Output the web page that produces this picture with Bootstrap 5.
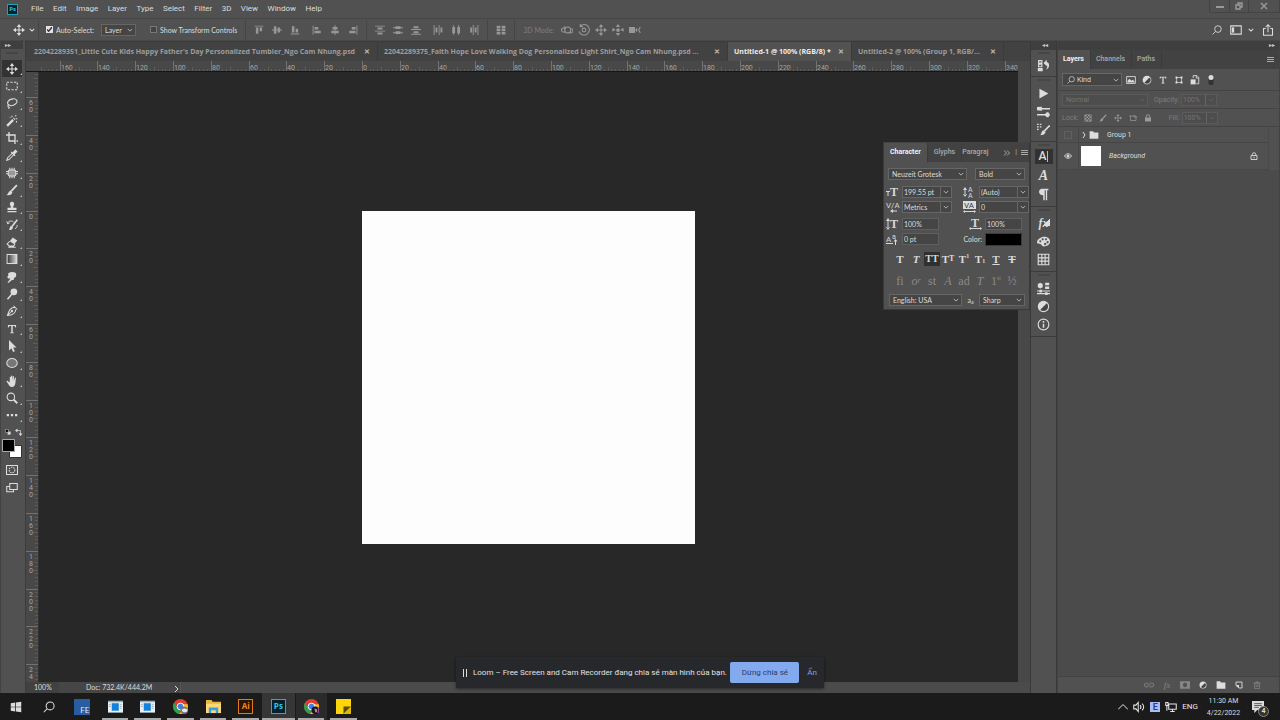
<!DOCTYPE html>
<html lang="en">
<head>
<meta charset="utf-8">
<meta name="viewport" content="width=device-width, initial-scale=1">
<title>Untitled-1 @ 100% (RGB/8)</title>
<link rel="stylesheet" href="https://cdn.jsdelivr.net/npm/bootstrap@5.3.0/dist/css/bootstrap.min.css">
<style>
:root{--chrome:#515151;--field:#454545;--edge:#666;--ink:#dcdcdc}
body{font:8px/12px Roboto,"Noto Sans",sans-serif;background:#282828;color:var(--ink);overflow:hidden}
button,input,select{font:inherit;color:inherit;background:none;border:0;padding:0;margin:0;border-radius:0}
button{display:inline-flex;align-items:center;justify-content:center}
a{color:inherit;text-decoration:none}
svg.ic{width:12px;height:12px;display:block;fill:none;stroke:currentColor;stroke-width:1.4;flex:none}
svg .f{fill:currentColor;stroke:none}
.s10{width:10px!important;height:10px!important}
.s8{width:8px!important;height:8px!important}
.s6{width:6px!important;height:6px!important}
.menubar{height:19px;background:var(--chrome);border-bottom:1px solid #464646;padding-left:7px}
.menubar nav{width:291px;margin-left:13px}
.pslogo{background:#06202c;border:1px solid #1fa2bd;color:#2fc0e0;width:11px;height:11px;font:bold 6px/9px "Open Sans",sans-serif;text-align:center}
.winctl{align-self:flex-start;height:13px;border:1px solid #444;border-top:0;color:#9a9a9a}
.winctl button{width:19px}
.winctl button+button{border-left:1px solid #444}
.winctl button:last-child{width:31px}
.optbar{height:22px;background:var(--chrome);font:7px/12px Lato,sans-serif;border-bottom:1px solid #484848;padding-left:13px}
.tick{appearance:none;width:7px;height:7px;border:1px solid #777;background:#444;flex:none}
.tick:checked{background:#e2e2e2 url("data:image/svg+xml,%3Csvg xmlns='http://www.w3.org/2000/svg' viewBox='0 0 8 8'%3E%3Cpath d='M1 4l2 2 4-5' fill='none' stroke='%23333' stroke-width='1.6'/%3E%3C/svg%3E") center/7px;border-color:#e2e2e2}
.checklabel{gap:3px}
.pick{--chev:url("data:image/svg+xml,%3Csvg xmlns='http://www.w3.org/2000/svg' viewBox='0 0 8 8'%3E%3Cpath d='M1 2.5l3 3 3-3' fill='none' stroke='%23bbb' stroke-width='1.2'/%3E%3C/svg%3E");appearance:none;height:12px;border:1px solid var(--edge);background:var(--field) var(--chev) no-repeat right 2px center/6px;padding-left:3px;line-height:10px;min-width:0}
.pick.split{padding-left:1px;background:var(--chev) no-repeat right 2px center/6px,linear-gradient(var(--edge) 0 0) no-repeat right 10px center/1px 100%,var(--field)}
.pick.off{color:#757575;border-color:#5b5b5b;background-color:#4d4d4d;--chev:url("data:image/svg+xml,%3Csvg xmlns='http://www.w3.org/2000/svg' viewBox='0 0 8 8'%3E%3Cpath d='M1 2.5l3 3 3-3' fill='none' stroke='%23666' stroke-width='1.2'/%3E%3C/svg%3E");opacity:1}
.pick.bare{border:0;background-color:transparent}
.box-in{height:12px;border:1px solid #5f5f5f;background:var(--field);padding-left:1px;line-height:10px;width:37px}
.vr1{width:1px;height:20px;background:#454545;flex:none}
.vr1.first{margin:0 7px 0 3px}
#autosel{width:35px;margin-left:7px;margin-right:14px}
.cells{color:#979797}
.cells button{width:18px;height:18px}
.cells.c17 button{width:17px}
.optright{gap:8px;padding-right:6px}
.wk{gap:6px}
.tools{width:26px;background:var(--chrome);border-left:1px solid #434343;border-right:1px solid #3c3c3c;padding-right:2px;flex:none}
.strip{height:8px;background:#3f3f3f;font-size:6px;line-height:8px;color:#ccc;flex:none}
.strip.tall{height:9px}
.grips{height:11px;flex:none;background:radial-gradient(circle,#444 0 0) no-repeat center 3px/12px 2px}
.toollist{height:364px}
.toollist button{flex:1 1 0;width:20px;min-height:0;position:relative}
.toollist button::after{content:"";position:absolute;right:0;bottom:2px;border:1px solid transparent;border-right-color:#bbb;border-bottom-color:#bbb}
.toollist button.on{background:#333}
.swatches{margin-top:2px}
.tools .screenmode{margin-top:6px}
main{min-width:0}
.doctabs{height:20px;background:#424242;border-top:1px solid #3c3c3c;font:bold 7px/20px "Open Sans",sans-serif;color:#9d9d9d;padding-left:2px;flex:none}
.doctab{padding:0 7px 0 6px;flex:0 1 350px;white-space:nowrap;border-right:1px solid #3b3b3b;min-width:0}
.doctab.on{background:#525252;color:#ececec;flex-basis:124px}
.doctab.last{flex-basis:152px}
.doctab button{font-size:7px;color:#bbb}
.hruler{height:11px;background:#484848;border-bottom:1px solid #151515;flex:none}
.vruler{width:13px;background:#484848;border-right:1px solid #333;flex:none}
.hruler svg,.vruler svg{display:block;width:100%;height:100%;overflow:hidden}
.rl{font:7px Roboto,sans-serif;fill:#a5a5a5}
.artboard{width:333px;aspect-ratio:1;background:#fdfdfd}
.scrolly{width:12px;background:#484848;flex:none}
.status{height:11px;background:#464646;font:7px/11px Lato,sans-serif;flex:none}
.status .thumb{background:#4b4b4b;border-left:1px solid #555}
.docinfo{padding-left:27px;padding-right:20px}
.zoombox{width:33px;padding-left:8px;background:#414141;line-height:11px;height:11px}
.dock{width:27px;background:var(--chrome);border-left:1px solid #393939;border-right:1px solid #393939;flex:none}
.dockset{border-bottom:1px solid #3c3c3c;padding:7px 0 3px;background:radial-gradient(circle,#464646 0 0) no-repeat center 2px/12px 2px}
.dockset.one{padding:6px 0 2px}
.dockset button{width:18px;height:18px;flex:none}
.dockset button.on{background:#323232;height:15px;margin:0 0 3px}
.dockset svg{width:13px;height:13px}
.dockset .chA{font:500 12px/15px Roboto,sans-serif}
.dockset .chA span{border-right:1px solid #bbb;line-height:11px;padding-right:1px}
.dockset .chS{font:italic bold 14px/16px "Liberation Serif",serif}
.dockset .fxs{font:italic bold 12px/16px "Liberation Serif",serif;background:linear-gradient(135deg,transparent 55%,#ddd 56%) no-repeat right 3px top 4px/9px 8px}
.layers{width:223px;background:var(--chrome);border-left:1px solid #434343;border-right:1px solid #434343;flex:none;font-size:7px}
.ptabs{background:#424242;height:19px;color:#a9a9a9;font:500 7px/19px Roboto,sans-serif}
.ptabs button{border-right:1px solid #3b3b3b;padding:0 6px 0 5px;white-space:nowrap}
.ptabs button.on{background:var(--chrome);color:#f2f2f2;font-weight:bold}
.charpanel .ptabs button{padding-left:6px}
.prow{border-bottom:1px solid #444;flex:none;padding-left:4px;height:18px}
.prow.kindrow{height:22px}
.dimrow{color:#7d7d7d}
.kind{width:60px;height:13px;border:1px solid var(--edge);background:var(--field);padding-left:4px}
.kind .pick{flex:1;padding-left:2px}
.kicons{margin-left:1px}
.kicons button{width:16px;height:16px}
.blend{width:86px;margin-right:6px}
.lab27{width:27px}
.num{width:36px}
.licons{margin:0 13px 0 2px;color:#999}
.licons button{width:15px;height:14px}
.lab12{width:13px}
.lrow{border-bottom:1px solid #464646;margin-right:10px;border-right:1px solid #4a4a4a;height:16px}
.lrow.big{height:27px;padding-right:10px}
.eyecell{width:21px;border-right:1px solid #454545;align-self:stretch;margin-right:2px}
.thumb20{width:20px;height:20px;background:#fff}
.sq{width:8px;height:8px;border:1px solid #606060}
.below{background:#4b4b4b}
.lfoot{height:17px;border-top:1px solid #424242;padding-right:13px;color:#858585}
.lfoot button{width:18px;height:15px}
.lfoot .lit{color:#ddd}
.fxi{font:italic 9px/12px "Liberation Serif",serif}
.charpanel{position:absolute;right:250px;top:142px;width:147px;height:168px;background:var(--chrome);border:1px solid #3a3a3a;border-top-color:#444;font:7px/12px Lato,sans-serif;z-index:5}
.fontrow{padding:6px 4px 6px}
.fontsel{width:79px}
.weight{width:50px}
.pair{display:grid;grid-template-columns:77px 1fr;padding-left:2px;row-gap:3px}
.pair>div{display:flex;align-items:center;gap:3px;height:12px}
.pair.two{padding-top:5px}
.pair.two>div.shift{padding-left:6px}
.pair .pick{width:50px}
.pair svg{width:13px;height:12px;color:#d8d8d8;fill:currentColor;flex:none;overflow:visible}
.pair svg text{font-family:"Liberation Serif",serif;font-weight:bold}
.pair svg text.sans{font-family:Roboto,sans-serif;font-weight:normal}
.colorlab{width:19px;text-align:right}
.colorchip{width:37px;height:13px;background:#000;border:1px solid #3a3a3a}
.glyphs{display:grid;grid-template-columns:repeat(8,16px);padding:7px 0 0 8px}
.glyphs button{height:14px;font:bold 11px/14px "Liberation Serif",serif;color:#dadada}
.glyphs button.on{background:#303030;font-size:10px}
.glyphs.ot{padding-top:8px}
.glyphs.ot button{color:#8b8b8b;font-weight:normal;font-size:12px}
.glyphs small{font-size:8px}
.glyphs sup,.glyphs sub{font-size:6px}
.langrow{padding:6px 4px 0 5px}
.lang{width:73px}
.aa{width:46px}
.loom{position:absolute;left:456px;bottom:32px;width:368px;height:31px;background:#26282b;z-index:6;box-shadow:0 1px 3px #0007;padding:0 7px 0 6px;color:#e3e3e3}
.loom .say{padding-left:5px}
.loom .stop{background:#83a9ee;color:#26406e;border-radius:2px;width:69px;height:21px;flex:none}
.loom .hide1{color:#7fa6ea}
.taskbar{height:27px;background:#1b1b1b;flex:none}
.taskbar .tb{width:33px;height:27px;padding-right:2px}
.apps{width:294px}
.apps button{flex:1 1 0;height:27px;position:relative}
.apps button svg,.apps .adobe{width:15px;height:15px;margin-bottom:1px}
.apps button.run::after{content:"";position:absolute;left:3px;right:3px;bottom:0;height:2px;background:#aaa}
.apps button.act{background:#363636}
.apps button.act::after{left:0!important;right:0!important}
.apps button.act2{background:linear-gradient(90deg,transparent 1px,#2a2a2a 1px)}
.adobe{font:bold 8px/12px "Open Sans",sans-serif;border:1px solid #e07b1c;color:#f08a24;background:#2b1503}
.adobe.ps{border-color:#22aeca;color:#33c4e4;background:#06202c}
.fe{width:16px;height:16px;background:#2a5ca0;color:#dfe9f7;font:8px/10px Lato,sans-serif;display:flex;align-items:flex-end;justify-content:flex-end;padding-right:1px}
.tray{gap:5px;color:#e6e6e6}
.tray .ebox{width:10px;height:10px;background:#a9bdf2;color:#1d3fa8;font:bold 9px/10px Roboto,sans-serif;text-align:center}
.clock{line-height:12px;width:51px;font-size:7px;text-align:center}
.notif{width:20px;height:20px;position:relative;margin-right:11px;padding-right:3px}
.notif span{position:absolute;right:0;bottom:0;width:11px;height:11px;border-radius:50%;background:#333;border:1px solid #888;font:bold 7px/9px Roboto,sans-serif}
</style>
</head>
<body class="d-flex flex-column vh-100">

<svg class="d-none" aria-hidden="true">
<symbol id="move" viewBox="0 0 16 16"><path d="M8 3v10M3 8h10"/><path class="f" d="M8 0l3 4H5zM8 16l3-4H5zM0 8l4-3v6zM16 8l-4-3v6z"/></symbol>
<symbol id="chev" viewBox="0 0 8 8"><path d="M1 2.500l3 3 3-3"/></symbol>
<symbol id="marquee" viewBox="0 0 16 16"><path d="M1 3h14v10H1z" stroke-dasharray="3 1.800"/></symbol>
<symbol id="lasso" viewBox="0 0 16 16"><path d="M4 11C0 8 3 3 9 2.500c6-.5 7 4 4 6.500-3 2.500-7 3-9 1.500-2 0-2 3 0 3 1 0 0 2-1 2"/></symbol>
<symbol id="wand" viewBox="0 0 16 16"><path d="M1.500 14.500l8-8" stroke-width="3"/><path d="M10.500 5.500l1-1" stroke-width="3"/><path d="M8 1v2M13 0v2M15 5h-2M14 8v2M5 3h1"/></symbol>
<symbol id="crop" viewBox="0 0 16 16"><path d="M4 0v12h8M0 4h12v12M14 12h2" stroke-width="1.800"/></symbol>
<symbol id="dropper" viewBox="0 0 16 16"><path d="M9 5L2 12l-1 3 3-1 7-7"/><path d="M7 4l5 5" stroke-width="2"/><path d="M10 6l4-4" stroke-width="4"/></symbol>
<symbol id="patch" viewBox="0 0 16 16"><rect x="3" y="4" width="10" height="8" rx="2" fill="#999"/><path d="M5 1v3M8 1v3M11 1v3M5 12v3M8 12v3M11 12v3M0 6h3M0 9h3M13 6h3M13 9h3"/></symbol>
<symbol id="brush" viewBox="0 0 16 16"><path d="M14.500 1.500L7 9.500" stroke-width="2.400"/><path class="f" d="M6 8.500L8.500 11C8 14.500 4 15.500 1 14.500 3 13.500 3 9.500 6 8.500z"/></symbol>
<symbol id="stamp" viewBox="0 0 16 16"><path class="f" d="M8 1a3 3 0 0 1 2 5.200L9.500 9H14v3H2V9h4.500L6 6.200A3 3 0 0 1 8 1zM2 13.300h12v1.700H2z"/></symbol>
<symbol id="hbrush" viewBox="0 0 16 16"><path d="M15 1L8 10" stroke-width="2.200"/><path class="f" d="M7 9l2.500 2.500C8 14.500 6 15 4 14.500 5 13 5 10 7 9z"/><path d="M2 6c1-4 6-4 8-2M1 3l1.200 3.400L5 5M12 13c2-1 3-3 3-5" stroke-width="1.200"/></symbol>
<symbol id="eraser" viewBox="0 0 16 16"><path class="f" d="M9 2l6 4-4 5-6-4z"/><path d="M5 7l-3.500 3.500 3 3H10l2-3M3 15h10"/></symbol>
<symbol id="smudge" viewBox="0 0 16 16"><path class="f" d="M3 3c3-2 6-2 9-1 2 1 2 4 1 6l-2 1-1 3H8l-5 4c-1 0-1-1 0-2l3-4H3C1 9 2 7 3 6z"/></symbol>
<symbol id="dodge" viewBox="0 0 16 16"><circle class="f" cx="10.500" cy="5" r="4.500"/><path d="M8 8l-6 7" stroke-width="2"/></symbol>
<symbol id="pen" viewBox="0 0 16 16"><path d="M10 1l5 5M12 3.500C7 2.500 4 6 2 14c7-.5 11-4 11-8M2 14l5-5"/><circle class="f" cx="8" cy="8" r="1.600"/></symbol>
<symbol id="type" viewBox="0 0 16 16"><path class="f" d="M1.500 1.500h13V5.500h-1L12 3H9.200v10.200L11 14v.8H5V14l1.800-.8V3H4L2.500 5.500h-1z"/></symbol>
<symbol id="arrow" viewBox="0 0 16 16"><path class="f" d="M4 0v14l3.200-3 2.300 5 2.300-1-2.200-5H14z"/></symbol>
<symbol id="ellipse" viewBox="0 0 16 16"><ellipse cx="8" cy="8" rx="7" ry="6" fill="#777"/></symbol>
<symbol id="hand" viewBox="0 0 16 16"><path class="f" d="M5 8V3c0-1 1.600-1 1.600 0v4V1.500c0-1 1.700-1 1.700 0V7l.7-5c.2-1 1.600-.8 1.600.2L10.500 8l1.200-4c.3-1 1.600-.6 1.500.4L12.500 11c-.5 3-2 5-4.500 5-3 0-4-2-5-4L.700 8.500C.500 7.500 2 7.300 2.700 8.200L4.500 10z"/></symbol>
<symbol id="zoomi" viewBox="0 0 16 16"><circle cx="6.500" cy="6.500" r="5"/><path d="M10 10l5 5" stroke-width="2.400"/></symbol>
<symbol id="find" viewBox="0 0 16 16"><circle cx="9.500" cy="6.500" r="5.300"/><path d="M5.500 10.500L1 15"/></symbol>
<symbol id="dots" viewBox="0 0 16 16"><path class="f" d="M1 6.500h3v3H1zM6.500 6.500h3v3h-3zM12 6.500h3v3h-3z"/></symbol>
<symbol id="swap" viewBox="0 0 16 16"><path d="M3 5h8v8"/><path class="f" d="M5 1v8L0 5zM7 11h8l-4 5z"/></symbol>
<symbol id="mini" viewBox="0 0 16 16"><path class="f" d="M7 7h8v8H7z"/><path d="M1 1h8v8H1z" fill="#000"/></symbol>
<symbol id="qmask" viewBox="0 0 16 16"><path d="M.7 2h14.600v12H.7z"/><circle cx="8" cy="8" r="3.800" stroke-dasharray="2 1.200"/></symbol>
<symbol id="screen" viewBox="0 0 16 16"><path d="M5 2h10v8H5z"/><path d="M5 6H1v7h9v-3"/></symbol>
<symbol id="al1" viewBox="0 0 16 16"><path class="f" d="M1 1h14v1.500H1zM3 4h4v10H3zM9 4h4v6H9z"/></symbol>
<symbol id="al2" viewBox="0 0 16 16"><path class="f" d="M0 7.200h16v1.500H0zM3 2h4v12H3zM9 4h4v8H9z"/></symbol>
<symbol id="al3" viewBox="0 0 16 16"><path class="f" d="M1 13.500h14V15H1zM3 2h4v10H3zM9 6h4v6H9z"/></symbol>
<symbol id="ds1" viewBox="0 0 16 16"><path class="f" d="M0 1h16v1.500H0zM4 4h8v3H4zM0 9h16v1.500H0zM4 12h8v3H4z"/></symbol>
<symbol id="ds2" viewBox="0 0 16 16"><path class="f" d="M0 3.700h16V5H0zM4 2h8v4.500H4zM0 11.500h16V13H0zM4 10h8v4.500H4z"/></symbol>
<symbol id="ds3" viewBox="0 0 16 16"><path class="f" d="M0 6.500h16V8H0zM4 2h8v3H4zM0 14h16v1.500H0zM4 10h8v3H4z"/></symbol>
<symbol id="dist" viewBox="0 0 16 16"><path class="f" d="M1 1h6v4H1zM9 1h6v4H9zM1 6h6v4H1zM9 6h6v4H9zM1 11h6v4H1zM9 11h6v4H9z"/></symbol>
<symbol id="orbit" viewBox="0 0 16 16"><circle cx="9" cy="8" r="4"/><path d="M5 11C-1 11-1 5 5 5M11 12c6 0 6-4 3-6M4 3l2 2-2 2"/></symbol>
<symbol id="roll" viewBox="0 0 16 16"><circle cx="8" cy="8" r="2.500"/><path d="M3 3a7 7 0 1 1-1.500 7M3 0v3.500h3.500"/></symbol>
<symbol id="slide" viewBox="0 0 16 16"><circle class="f" cx="8" cy="8" r="2.500"/><path class="f" d="M8 0l3 4H5zM8 16l3-4H5zM0 10l1-5 4 3zM16 10l-1-5-4 3z"/></symbol>
<symbol id="cam" viewBox="0 0 16 16"><path class="f" d="M0 4h8v8H0zM8 8l3-3v6z"/><path d="M15 4l-2 4 2 4"/></symbol>
<symbol id="wksp" viewBox="0 0 16 16"><path d="M1 2.500h14v11H1z"/><path class="f" d="M2.500 4.500h3v7h-3z"/></symbol>
<symbol id="share" viewBox="0 0 16 16"><path d="M5 6H2v9h12V6h-3M8 11V1M5 4l3-3 3 3"/></symbol>
<symbol id="hist" viewBox="0 0 16 16"><path d="M2 2h4v3H2zM2 6.500h4v3H2z"/><path class="f" d="M1 11h6v4H1zM8 5l4-4v3c4 0 4 8-1 9 2-2 2-5 1-6v2z"/></symbol>
<symbol id="play" viewBox="0 0 16 16"><path class="f" d="M3 2l11 6-11 6z"/></symbol>
<symbol id="brushes" viewBox="0 0 16 16"><path d="M5 4.500h11M0 12h11" stroke-width="1.800"/><path class="f" d="M0 2.500L6 2v5L0 6.500zM9 12l3-3h2l2 3-2 3h-2z"/></symbol>
<symbol id="bset" viewBox="0 0 16 16"><path d="M15.500 3L9 10" stroke-width="2"/><path class="f" d="M8 9l2.500 2.500C9 15 6 15 4 15c2-1.500 1-5 4-6zM0 1h2v1.500H0zM3.500 1h2v1.500h-2zM0 4h2v1.500H0zM3.500 4h2v1.500h-2zM0 7h2v1.500H0z"/></symbol>
<symbol id="para" viewBox="0 0 16 16"><path class="f" d="M6.500 1H14v1.800h-1.500V15h-1.700V2.800H9.500V15H7.700V9C1 9 1 1 6.500 1z"/></symbol>
<symbol id="palette" viewBox="0 0 16 16"><path fill-rule="evenodd" class="f" d="M9 2c5 0 7 3 7 6 0 4-4 6-8 6-2 0-2-3-4-3C2 11 0 11 0 9c0-4 5-7 9-7zM7 4a1.300 1.300 0 1 0 .1 0zM11 4a1.300 1.300 0 1 0 .1 0zM13 7.500a1.300 1.300 0 1 0 .1 0zM10 9.500a1.500 1.500 0 1 0 .1 0zM4 6.500a1.200 1.200 0 1 0 .1 0z"/></symbol>
<symbol id="grid" viewBox="0 0 16 16"><path d="M1.500 1.500h13v13h-13zM1.500 6h13M1.500 10h13M6 1.500v13M10 1.500v13"/></symbol>
<symbol id="props" viewBox="0 0 16 16"><path class="f" d="M1 2.500L4 1l3 1.500v4L4 8 1 6.500zM10 1h5v3h-5zM10 5.500h5v3h-5zM0 10.500h16v1.300H0zM0 13.500h16V15H0zM3 9.500h3V13H3zM10 12.500h3V16h-3z"/></symbol>
<symbol id="adj" viewBox="0 0 16 16"><circle class="f" cx="8" cy="8" r="7"/><path fill="#444" stroke="none" d="M12 4a5.500 5.500 0 0 1-8 8z"/></symbol>
<symbol id="info" viewBox="0 0 16 16"><circle cx="8" cy="8" r="6.600"/><path d="M8 7v5M8 3.800v2" stroke-width="1.800"/></symbol>
<symbol id="pic" viewBox="0 0 16 16"><path d="M1 2.500h14v11H1z"/><path class="f" d="M2.500 12V9l3-3 3 3 2-1.500 3 2.500v2z"/></symbol>
<symbol id="shape" viewBox="0 0 16 16"><path d="M3 3h10v10H3z"/><path class="f" d="M1 1h4v4H1zM11 1h4v4h-4zM1 11h4v4H1zM11 11h4v4h-4z"/></symbol>
<symbol id="smart" viewBox="0 0 16 16"><path d="M5 5V1h6l3 3v10h-4M10 1v4h4"/><path class="f" d="M1 7h8v8H1z"/></symbol>
<symbol id="checker" viewBox="0 0 16 16"><path d="M1.500 1.500h13v13h-13z"/><path class="f" d="M2 2h3v3H2zM8 2h3v3H8zM5 5h3v3H5zM11 5h3v3h-3zM2 8h3v3H2zM8 8h3v3H8zM5 11h3v3H5zM11 11h3v3h-3z"/></symbol>
<symbol id="artb" viewBox="0 0 16 16"><path d="M0 4h14v9H3V4M10 2v4h6"/></symbol>
<symbol id="lockf" viewBox="0 0 16 16"><path class="f" d="M2 7h12v8H2z"/><path d="M4.500 8V5a3.500 3.500 0 0 1 7 0v3" stroke-width="2"/></symbol>
<symbol id="lock" viewBox="0 0 16 16"><path d="M2 7h12v8H2zM4.500 7V5a3.500 3.500 0 0 1 7 0v2" stroke-width="1.800"/><path class="f" d="M7 9.500h2v3H7z"/></symbol>
<symbol id="folder" viewBox="0 0 16 16"><path class="f" d="M1 2h5.500l1.500 2h7v10H1z"/></symbol>
<symbol id="eye" viewBox="0 0 16 16"><path d="M1 8c3.500-6 10.500-6 14 0-3.500 6-10.500 6-14 0z" stroke-width="1.800"/><circle class="f" cx="8" cy="8" r="3"/></symbol>
<symbol id="link" viewBox="0 0 16 16"><path d="M7 5H3.500a3 3 0 0 0 0 6H7M9 5h3.500a3 3 0 0 1 0 6H9M5 8h6"/></symbol>
<symbol id="mask" viewBox="0 0 16 16"><path fill-rule="evenodd" class="f" d="M0 2h16v12H0zM8 4.500a3.500 3.500 0 1 0 .1 0z"/></symbol>
<symbol id="newl" viewBox="0 0 16 16"><path d="M2 2h12v12H8L2 9z" stroke-width="1.800"/><path class="f" d="M2 8h6v6z"/></symbol>
<symbol id="trash" viewBox="0 0 16 16"><path d="M3 4h10v11H3zM1 4h14M6 4V1.500h4V4M6 7v5M8 7v5M10 7v5"/></symbol>
<symbol id="burger" viewBox="0 0 8 8"><path d="M0 1.500h7M0 3.500h7M0 5.500h7" stroke-width="1"/></symbol>
<symbol id="win" viewBox="0 0 16 16"><path class="f" d="M1 3l6-1v5.600H1zM8 1.900L15 1v6.600H8zM1 8.400h6V14l-6-1zM8 8.400h7V15l-7-1z"/></symbol>
<symbol id="appwin" viewBox="0 0 16 16"><path fill="#e9f1f6" stroke="none" d="M0 2h16v12.500H0z"/><path fill="#7db4d8" stroke="none" d="M0 2h16v1.500H0z"/><path fill="#1382dc" stroke="none" d="M4 4.500h7.500v8H4z"/><path stroke="#aaa" stroke-width="1" d="M12.500 6h2M12.500 8h2M12.500 10h2M1 6h2M1 8h2"/></symbol>
<symbol id="chrome" viewBox="0 0 16 16"><circle cx="8" cy="8" r="8" fill="#e33b2e" stroke="none"/><path fill="#2ba24c" stroke="none" d="M1.100 4L5 10l3 1.500L6.500 15.900A8 8 0 0 1 1.100 4z"/><path fill="#fbc116" stroke="none" d="M15.500 5.500H8l3.500 4.500-5 5.900A8 8 0 0 0 15.500 5.500z"/><circle cx="8" cy="8" r="3.600" fill="#3f7fe8" stroke="#fff" stroke-width="1"/></symbol>
<symbol id="files" viewBox="0 0 16 16"><path fill="#e8b63c" stroke="none" d="M0 1h6l1 2h9v12H0z"/><path fill="#f9d978" stroke="none" d="M0 5h16v10H0z"/><path fill="#3d9be0" stroke="none" d="M3 9h10v6h-2.500v-3h-5v3H3z"/></symbol>
<symbol id="note" viewBox="0 0 16 16"><path fill="#fcd60a" stroke="none" d="M0 0h16v16H0z"/><path fill="#5a4d0a" stroke="none" d="M8 8h8l-8 8z"/><path fill="#e0b800" stroke="none" d="M16 8v8H8z"/></symbol>
<symbol id="spk" viewBox="0 0 16 16"><path d="M1 5.500h3l3-3.500v12L4 10.500H1zM9.500 5.500c1.500 1.500 1.500 3.500 0 5M12 3.500c3 2.500 3 6.500 0 9"/></symbol>
<symbol id="net" viewBox="0 0 16 16"><path d="M5 4h10v7H5zM10 11v3M7 14h6M1 2h3v4H1zM2.500 6v7"/></symbol>
</svg>

<header class="menubar d-flex align-items-center flex-shrink-0">
  <div class="pslogo">Ps</div>
  <nav class="d-flex justify-content-between" aria-label="Menu">
    <a href="#">File</a><a href="#">Edit</a><a href="#">Image</a><a href="#">Layer</a><a href="#">Type</a><a href="#">Select</a><a href="#">Filter</a><a href="#">3D</a><a href="#">View</a><a href="#">Window</a><a href="#">Help</a>
  </nav>
  <div class="winctl d-flex ms-auto">
    <button aria-label="Minimize"><svg class="ic s8" viewBox="0 0 8 8"><path d="M0 5h8" stroke-width="2"/></svg></button>
    <button aria-label="Restore"><svg class="ic s8" viewBox="0 0 8 8"><path d="M3 3V1h4v4H5M1 3h4v4H1z"/></svg></button>
    <button aria-label="Close"><svg class="ic s8" viewBox="0 0 8 8"><path d="M1 1l6 6M7 1L1 7"/></svg></button>
  </div>
</header>

<div class="optbar d-flex align-items-center flex-shrink-0">
  <button aria-label="Move tool"><svg class="ic"><use href="#move"/></svg></button>
  <svg class="ic s6 ms-1"><use href="#chev"/></svg>
  <div class="vr1 first"></div>
  <label class="checklabel d-flex align-items-center"><input type="checkbox" class="tick" checked>Auto-Select:</label>
  <select class="pick" aria-label="Auto-select target" id="autosel"><option>Layer</option></select>
  <label class="checklabel d-flex align-items-center"><input type="checkbox" class="tick">Show Transform Controls</label>
  <div class="vr1 ms-2 me-1"></div>
  <div class="cells d-flex me-1"><button aria-label="Align top"><svg class="ic s10"><use href="#al1"/></svg></button><button aria-label="Align middle"><svg class="ic s10"><use href="#al2"/></svg></button><button aria-label="Align bottom"><svg class="ic s10"><use href="#al3"/></svg></button></div>
  <div class="cells d-flex me-1"><button aria-label="Align left"><svg class="ic s10" viewBox="0 0 16 16"><path class="f" d="M1 1h1.500v14H1zM4 3h6v4H4zM4 9h10v4H4z"/></svg></button><button aria-label="Align center"><svg class="ic s10" viewBox="0 0 16 16"><path class="f" d="M7.200 0h1.500v16H7.200zM4 3h8v4H4zM2 9h12v4H2z"/></svg></button><button aria-label="Align right"><svg class="ic s10" viewBox="0 0 16 16"><path class="f" d="M13.500 1H15v14h-1.500zM6 3h6v4H6zM2 9h10v4H2z"/></svg></button></div>
  <div class="vr1 me-1"></div>
  <div class="cells d-flex me-1"><button aria-label="Distribute top"><svg class="ic s10"><use href="#ds1"/></svg></button><button aria-label="Distribute middle"><svg class="ic s10"><use href="#ds2"/></svg></button><button aria-label="Distribute bottom"><svg class="ic s10"><use href="#ds3"/></svg></button></div>
  <div class="cells d-flex me-1"><button aria-label="Distribute left"><svg class="ic s10" viewBox="0 0 16 16"><path class="f" d="M1 0h1.500v16H1zM4 4h3v8H4zM9 0h1.500v16H9zM12 4h3v8h-3z"/></svg></button><button aria-label="Distribute center"><svg class="ic s10" viewBox="0 0 16 16"><path class="f" d="M3.700 0H5v16H3.700zM2 3h4.500v10H2zM11.500 0H13v16h-1.500zM10 3h4.500v10H10z"/></svg></button><button aria-label="Distribute right"><svg class="ic s10" viewBox="0 0 16 16"><path class="f" d="M6 0h1.500v16H6zM2 4h3v8H2zM13.500 0H15v16h-1.500zM9 4h3v8H9z"/></svg></button></div>
  <div class="vr1 me-1"></div>
  <div class="cells d-flex me-1"><button aria-label="Auto-align"><svg class="ic s10"><use href="#dist"/></svg></button></div>
  <div class="vr1 me-1"></div>
  <span class="dimrow ms-1">3D Mode:</span>
  <div class="cells c17 d-flex ms-1"><button aria-label="Orbit"><svg class="ic"><use href="#orbit"/></svg></button><button aria-label="Roll"><svg class="ic"><use href="#roll"/></svg></button><button aria-label="Pan"><svg class="ic"><use href="#move"/></svg></button><button aria-label="Slide"><svg class="ic"><use href="#slide"/></svg></button><button aria-label="Zoom camera"><svg class="ic"><use href="#cam"/></svg></button></div>
  <div class="optright d-flex align-items-center ms-auto">
    <button aria-label="Search"><svg class="ic s10"><use href="#find"/></svg></button>
    <button class="wk" aria-label="Workspace"><svg class="ic"><use href="#wksp"/></svg><svg class="ic s6"><use href="#chev"/></svg></button>
    <button aria-label="Share"><svg class="ic"><use href="#share"/></svg></button>
  </div>
</div>

<div class="d-flex flex-grow-1">
  <aside class="tools d-flex flex-column align-items-center">
    <div class="strip w-100 ps-1">▸▸</div>
    <div class="grips w-100"></div>
    <div class="toollist d-flex flex-column">
      <button class="on" aria-label="Move"><svg class="ic"><use href="#move"/></svg></button>
      <button aria-label="Marquee"><svg class="ic"><use href="#marquee"/></svg></button>
      <button aria-label="Lasso"><svg class="ic"><use href="#lasso"/></svg></button>
      <button aria-label="Magic wand"><svg class="ic"><use href="#wand"/></svg></button>
      <button aria-label="Crop"><svg class="ic"><use href="#crop"/></svg></button>
      <button aria-label="Eyedropper"><svg class="ic"><use href="#dropper"/></svg></button>
      <button aria-label="Patch"><svg class="ic"><use href="#patch"/></svg></button>
      <button aria-label="Brush"><svg class="ic"><use href="#brush"/></svg></button>
      <button aria-label="Clone stamp"><svg class="ic"><use href="#stamp"/></svg></button>
      <button aria-label="History brush"><svg class="ic"><use href="#hbrush"/></svg></button>
      <button aria-label="Eraser"><svg class="ic"><use href="#eraser"/></svg></button>
      <button aria-label="Gradient"><svg class="ic" viewBox="0 0 16 16"><linearGradient id="gr"><stop stop-color="#333"/><stop offset="1" stop-color="#ddd"/></linearGradient><rect x="1.500" y="2" width="13" height="12" fill="url(#gr)"/></svg></button>
      <button aria-label="Smudge"><svg class="ic"><use href="#smudge"/></svg></button>
      <button aria-label="Dodge"><svg class="ic"><use href="#dodge"/></svg></button>
      <button aria-label="Pen"><svg class="ic"><use href="#pen"/></svg></button>
      <button aria-label="Type"><svg class="ic s10"><use href="#type"/></svg></button>
      <button aria-label="Path selection"><svg class="ic"><use href="#arrow"/></svg></button>
      <button aria-label="Ellipse"><svg class="ic"><use href="#ellipse"/></svg></button>
      <button aria-label="Hand"><svg class="ic"><use href="#hand"/></svg></button>
      <button aria-label="Zoom"><svg class="ic"><use href="#zoomi"/></svg></button>
      <button aria-label="More tools"><svg class="ic"><use href="#dots"/></svg></button>
    </div>
    <div class="d-flex justify-content-between w-100 ps-1 pt-1">
      <button aria-label="Default colors"><svg class="ic s6"><use href="#mini"/></svg></button>
      <button aria-label="Swap colors"><svg class="ic s8"><use href="#swap"/></svg></button>
    </div>
    <svg class="swatches" width="22" height="22" viewBox="0 0 22 22" aria-label="Foreground and background color"><path d="M8.500 7.500h12v12h-12z" fill="#fff" stroke="#333"/><path d="M1.500 1.500h12v12h-12z" fill="#000" stroke="#aaa"/></svg>
    <button class="mt-1" aria-label="Quick mask"><svg class="ic"><use href="#qmask"/></svg></button>
    <button class="screenmode" aria-label="Screen mode"><svg class="ic"><use href="#screen"/></svg></button>
  </aside>

  <main class="d-flex flex-column flex-grow-1">
    <div class="doctabs d-flex">
      <div class="doctab d-flex justify-content-between"><span>22042289351_Little Cute Kids Happy Father's Day Personalized Tumbler_Ngo Cam Nhung.psd</span><button aria-label="Close tab">✕</button></div>
      <div class="doctab d-flex justify-content-between"><span>22042289375_Faith Hope Love Walking Dog Personalized Light Shirt_Ngo Cam Nhung.psd ...</span><button aria-label="Close tab">✕</button></div>
      <div class="doctab on d-flex justify-content-between"><span>Untitled-1 @ 100% (RGB/8) *</span><button aria-label="Close tab">✕</button></div>
      <div class="doctab last d-flex justify-content-between"><span>Untitled-2 @ 100% (Group 1, RGB/...</span><button aria-label="Close tab">✕</button></div>
    </div>
    <div class="d-flex flex-grow-1">
      <div class="d-flex flex-column flex-grow-1">
        <div class="hruler"><svg id="hr"></svg></div>
        <div class="d-flex flex-grow-1">
          <div class="vruler"><svg id="vr"></svg></div>
          <div class="flex-grow-1 d-flex align-items-center justify-content-center"><div class="artboard"></div></div>
        </div>
      </div>
      <div class="scrolly"></div>
    </div>
    <div class="status d-flex">
      <input class="zoombox" value="100%" aria-label="Zoom level">
      <span class="docinfo">Doc: 732.4K/444.2M</span>
      <svg class="ic s8 mt-1" viewBox="0 0 8 8"><path d="M3 0l3 3-3 3" stroke-width="1"/></svg>
      <div class="thumb flex-grow-1"></div>
    </div>
  </main>

  <aside class="dock">
    <div class="strip tall text-end pe-2">◂◂</div>
    <div class="dockset one d-flex flex-column align-items-center"><button aria-label="History"><svg class="ic"><use href="#hist"/></svg></button></div>
    <div class="dockset d-flex flex-column align-items-center"><button aria-label="Actions"><svg class="ic"><use href="#play"/></svg></button><button aria-label="Brush presets"><svg class="ic"><use href="#brushes"/></svg></button><button aria-label="Brush settings"><svg class="ic"><use href="#bset"/></svg></button></div>
    <div class="dockset d-flex flex-column align-items-center"><button class="on chA" aria-label="Character"><span>A</span></button><button class="chS" aria-label="Character styles">A</button><button aria-label="Paragraph"><svg class="ic"><use href="#para"/></svg></button></div>
    <div class="dockset d-flex flex-column align-items-center"><button class="fxs" aria-label="Styles">fx</button><button aria-label="Color"><svg class="ic"><use href="#palette"/></svg></button><button aria-label="Swatches"><svg class="ic"><use href="#grid"/></svg></button></div>
    <div class="dockset d-flex flex-column align-items-center"><button aria-label="Properties"><svg class="ic"><use href="#props"/></svg></button><button aria-label="Adjustments"><svg class="ic"><use href="#adj"/></svg></button><button aria-label="Info"><svg class="ic"><use href="#info"/></svg></button></div>
  </aside>

  <aside class="layers d-flex flex-column">
    <div class="strip tall text-end pe-1">▸▸</div>
    <div class="ptabs d-flex flex-shrink-0"><button class="on">Layers</button><button>Channels</button><button>Paths</button><span class="d-flex align-items-center ms-auto pe-1"><svg class="ic s8"><use href="#burger"/></svg></span></div>
    <div class="prow kindrow d-flex align-items-center">
      <div class="kind d-flex align-items-center"><svg class="ic s8"><use href="#find"/></svg><select class="pick bare" aria-label="Filter kind"><option>Kind</option></select></div>
      <div class="kicons d-flex"><button aria-label="Pixel"><svg class="ic s10"><use href="#pic"/></svg></button><button aria-label="Adjustment"><svg class="ic s10"><use href="#adj"/></svg></button><button aria-label="Type"><svg class="ic s8"><use href="#type"/></svg></button><button aria-label="Shape"><svg class="ic s8"><use href="#shape"/></svg></button><button aria-label="Smart object"><svg class="ic s10"><use href="#smart"/></svg></button><button aria-label="Filter toggle"><svg class="ic s10" viewBox="0 0 16 16"><rect x="4" y="3" width="8" height="13" rx="3" fill="#333" stroke="none"/><circle class="f" cx="8" cy="4" r="4"/></svg></button></div>
    </div>
    <div class="prow dimrow d-flex align-items-center">
      <select class="pick off blend" aria-label="Blend mode" disabled><option>Normal</option></select>
      <label for="opac" class="lab27">Opacity:</label><select class="pick split off num" id="opac" disabled><option>100%</option></select>
    </div>
    <div class="prow dimrow d-flex align-items-center">
      <span>Lock:</span>
      <div class="d-flex licons"><button aria-label="Lock transparency"><svg class="ic s8"><use href="#checker"/></svg></button><button aria-label="Lock pixels"><svg class="ic s8"><use href="#brush"/></svg></button><button aria-label="Lock position"><svg class="ic s8"><use href="#move"/></svg></button><button aria-label="Lock artboard"><svg class="ic s8"><use href="#artb"/></svg></button><button aria-label="Lock all"><svg class="ic s8"><use href="#lockf"/></svg></button></div>
      <label for="fillv" class="lab12">Fill:</label><select class="pick split off num" id="fillv" disabled><option>100%</option></select>
    </div>
    <div class="lrow d-flex align-items-center"><div class="eyecell d-flex align-items-center justify-content-center"><div class="sq"></div></div><svg class="ic s8" viewBox="0 0 8 8"><path d="M2 1l2 3-2 3" stroke-width="1"/></svg><svg class="ic s10"><use href="#folder"/></svg><span class="ms-2">Group 1</span></div>
    <div class="lrow big d-flex align-items-center"><div class="eyecell d-flex align-items-center justify-content-center"><svg class="ic s8"><use href="#eye"/></svg></div><div class="thumb20"></div><em class="ms-2 flex-grow-1">Background</em><svg class="ic s8"><use href="#lock"/></svg></div>
    <div class="below flex-grow-1"></div>
    <div class="lfoot d-flex align-items-center justify-content-end"><button aria-label="Link"><svg class="ic s10"><use href="#link"/></svg></button><button class="fxi" aria-label="Effects">fx</button><button aria-label="Mask"><svg class="ic s10"><use href="#mask"/></svg></button><button class="lit" aria-label="New adjustment"><svg class="ic s8"><use href="#adj"/></svg></button><button class="lit" aria-label="New group"><svg class="ic s10"><use href="#folder"/></svg></button><button class="lit" aria-label="New layer"><svg class="ic s8"><use href="#newl"/></svg></button><button aria-label="Delete"><svg class="ic s8"><use href="#trash"/></svg></button></div>
  </aside>
</div>

<section class="charpanel" aria-label="Character panel">
  <div class="ptabs d-flex"><button class="on">Character</button><button>Glyphs</button><button class="border-0 px-0">Paragraj</button><span class="d-flex align-items-center gap-1 ms-auto"><svg class="ic s8" viewBox="0 0 8 8"><path d="M1 1.500l2.500 2.500L1 6.500M4 1.500l2.500 2.500L4 6.500" stroke-width="1"/></svg><span>|</span><svg class="ic s8"><use href="#burger"/></svg></span></div>
  <div class="fontrow d-flex justify-content-between"><select class="pick fontsel" aria-label="Font"><option>Neuzeit Grotesk</option></select><select class="pick weight" aria-label="Weight"><option>Bold</option></select></div>
  <div class="pair">
    <div><svg viewBox="0 0 13 12"><text x="4" y="10" font-size="12">T</text><path d="M0 5h4v1H2.500v4h-1V6H0z"/></svg><select class="pick split" aria-label="Font size"><option>199.55 pt</option></select></div>
    <div><svg viewBox="0 0 13 12"><text class="sans" x="5" y="6" font-size="7">A</text><text class="sans" x="5" y="12" font-size="7">A</text><path d="M2 1l2 3H0zM2 11l2-3H0zM1.500 3h1v6h-1z"/></svg><select class="pick split" aria-label="Leading"><option>(Auto)</option></select></div>
    <div><svg viewBox="0 0 13 12"><text class="sans" x="0" y="7" font-size="8">V/A</text><path d="M4 10l3-2v1.500h4v1H7V12z"/></svg><select class="pick split" aria-label="Kerning"><option>Metrics</option></select></div>
    <div><svg viewBox="0 0 13 12"><path fill="#ddd" d="M0 0h13v8H0z"/><text x="1" y="7" font-size="8" class="sans" fill="#333">VA</text><path d="M0 10.500l2-1.500v1h9V9l2 1.500L11 12v-1H2v1z"/></svg><select class="pick split" aria-label="Tracking"><option>0</option></select></div>
  </div>
  <div class="pair two">
    <div><svg viewBox="0 0 13 12"><text x="4" y="10" font-size="12">T</text><path d="M2 0l2 3H0zM2 12l2-3H0zM1.500 2h1v8h-1z"/></svg><input class="box-in" value="100%" aria-label="Vertical scale"></div>
    <div class="shift"><svg viewBox="0 0 13 12"><text x="2" y="9" font-size="12">T</text><path d="M0 10.500l2-1.500v1h9V9l2 1.500L11 12v-1H2v1z"/></svg><input class="box-in" value="100%" aria-label="Horizontal scale"></div>
    <div><svg viewBox="0 0 13 12"><text class="sans" x="0" y="9" font-size="8">A</text><text class="sans" x="6" y="6" font-size="7">a</text><path d="M0 10h7v1H0zM9.500 6l2 2.500h-1.500V12H9V8.500H7.500z"/></svg><input class="box-in" value="0 pt" aria-label="Baseline shift"></div>
    <div><span class="colorlab">Color:</span><button class="colorchip" aria-label="Text color"></button></div>
  </div>
  <div class="glyphs">
    <button aria-label="Faux bold">T</button><button class="fst-italic" aria-label="Faux italic">T</button><button class="on" aria-label="All caps">TT</button><button aria-label="Small caps">T<small>T</small></button><button aria-label="Superscript">T<sup>1</sup></button><button aria-label="Subscript">T<sub>1</sub></button><button class="text-decoration-underline" aria-label="Underline">T</button><button class="text-decoration-line-through" aria-label="Strikethrough">T</button>
  </div>
  <div class="glyphs ot">
    <button>fi</button><button class="fst-italic">o<small>r</small></button><button>st</button><button class="fst-italic">A</button><button class="text-decoration-overline">ad</button><button class="fst-italic">T</button><button>1<sup>st</sup></button><button>½</button>
  </div>
  <div class="langrow d-flex justify-content-between align-items-center"><select class="pick lang" aria-label="Language"><option>English: USA</option></select><span>a<sub>a</sub></span><select class="pick aa" aria-label="Anti-aliasing"><option>Sharp</option></select></div>
</section>

<section class="loom d-flex align-items-center" aria-label="Screen sharing">
  <svg width="6" height="8" viewBox="0 0 6 8"><path d="M1.500 0v8M4.500 0v8" stroke="#ddd"/></svg>
  <span class="say flex-grow-1 text-nowrap">Loom – Free Screen and Cam Recorder đang chia sẻ màn hình của bạn.</span>
  <button class="stop">Dừng chia sẻ</button><button class="hide1 ms-2">Ẩn</button>
</section>

<footer class="taskbar d-flex align-items-center">
  <button class="tb" aria-label="Start"><svg class="ic"><use href="#win"/></svg></button>
  <button class="tb" aria-label="Search"><svg class="ic"><use href="#find"/></svg></button>
  <div class="apps d-flex">
    <button aria-label="FE"><span class="fe">FE</span></button>
    <button class="run" aria-label="Window 1"><svg class="ic"><use href="#appwin"/></svg></button>
    <button class="run" aria-label="Window 2"><svg class="ic"><use href="#appwin"/></svg></button>
    <button class="run" aria-label="Chrome"><svg class="ic" viewBox="0 0 16 16"><use href="#chrome"/><circle cx="12" cy="12" r="4" fill="#777" stroke="none"/><ellipse cx="12.500" cy="12" rx="3" ry="2" fill="#e6e6e6" stroke="none"/></svg></button>
    <button class="run" aria-label="File Explorer"><svg class="ic"><use href="#files"/></svg></button>
    <button class="run" aria-label="Illustrator"><span class="adobe">Ai</span></button>
    <button class="run act" aria-label="Photoshop"><span class="adobe ps">Ps</span></button>
    <button class="run act2" aria-label="Chrome profile 2"><svg class="ic" viewBox="0 0 16 16"><use href="#chrome"/><circle cx="12" cy="12" r="4" fill="#191321" stroke="none"/><path d="M11 10l3 1v3h-2z" fill="#b98c78" stroke="none"/><path d="M15 9c1 2 1 4 0 6" stroke="#8b4fb0"/></svg></button>
    <button class="run" aria-label="Sticky notes"><svg class="ic"><use href="#note"/></svg></button>
  </div>
  <div class="tray d-flex align-items-center ms-auto">
    <svg class="ic s10" viewBox="0 0 8 8"><path d="M0 6l4-4 4 4" stroke-width=".8"/></svg>
    <svg class="ic"><use href="#spk"/></svg>
    <span class="ebox">E</span>
    <svg class="ic"><use href="#net"/></svg>
    <span>ENG</span>
  </div>
  <div class="clock">11:30 AM<br>4/22/2022</div>
  <button class="notif" aria-label="Notifications"><svg class="ic" viewBox="0 0 16 16"><path class="f" d="M0 0h16v12h-9l-4 4v-4H0z"/><path d="M3 3.500h10M3 6h10M3 8.500h6" stroke="#333" stroke-width="1"/></svg><span>4</span></button>
</footer>

<script src="https://cdn.jsdelivr.net/npm/bootstrap@5.3.0/dist/js/bootstrap.bundle.min.js"></script>
<script>
// Rulers: one major division every 20 mm, ten minor ticks in each, zero at the artboard corner.
const NS='http://www.w3.org/2000/svg', STEP=37.8;
function add(svg,tag,attrs,text){const e=document.createElementNS(NS,tag);for(const k in attrs)e.setAttribute(k,attrs[k]);if(text!==undefined)e.textContent=text;svg.appendChild(e);}
function rulers(){
  const art=document.querySelector('.artboard').getBoundingClientRect();
  const h=document.getElementById('hr'),v=document.getElementById('vr');
  const hb=h.getBoundingClientRect(),vb=v.getBoundingClientRect();
  h.replaceChildren();v.replaceChildren();
  const ox=art.left-hb.left, oy=art.top-vb.top;
  for(let i=-120;i<260;i++){
    const major=i%10===0, n=String(Math.abs(i*2)), col=major?'#727272':'#5c5c5c';
    const x=Math.round(ox+i*STEP/10), y=Math.round(oy+i*STEP/10);
    if(x>12&&x<hb.width){
      add(h,'path',{d:`M${x+.5} ${major?0:i%5?8:6}V10`,stroke:col});
      if(major)add(h,'text',{x:x+1,y:9,class:'rl'},n);
    }
    if(y>0&&y<vb.height){
      add(v,'path',{d:`M${major?0:i%5?9:7} ${y+.5}H12`,stroke:col});
      if(major)n.split('').forEach((d,k)=>{if(y+8+k*7<vb.height+4)add(v,'text',{x:3,y:y+8+k*7,class:'rl'},d);});
    }
  }
}
rulers();addEventListener('resize',rulers);
</script>
</body>
</html>
